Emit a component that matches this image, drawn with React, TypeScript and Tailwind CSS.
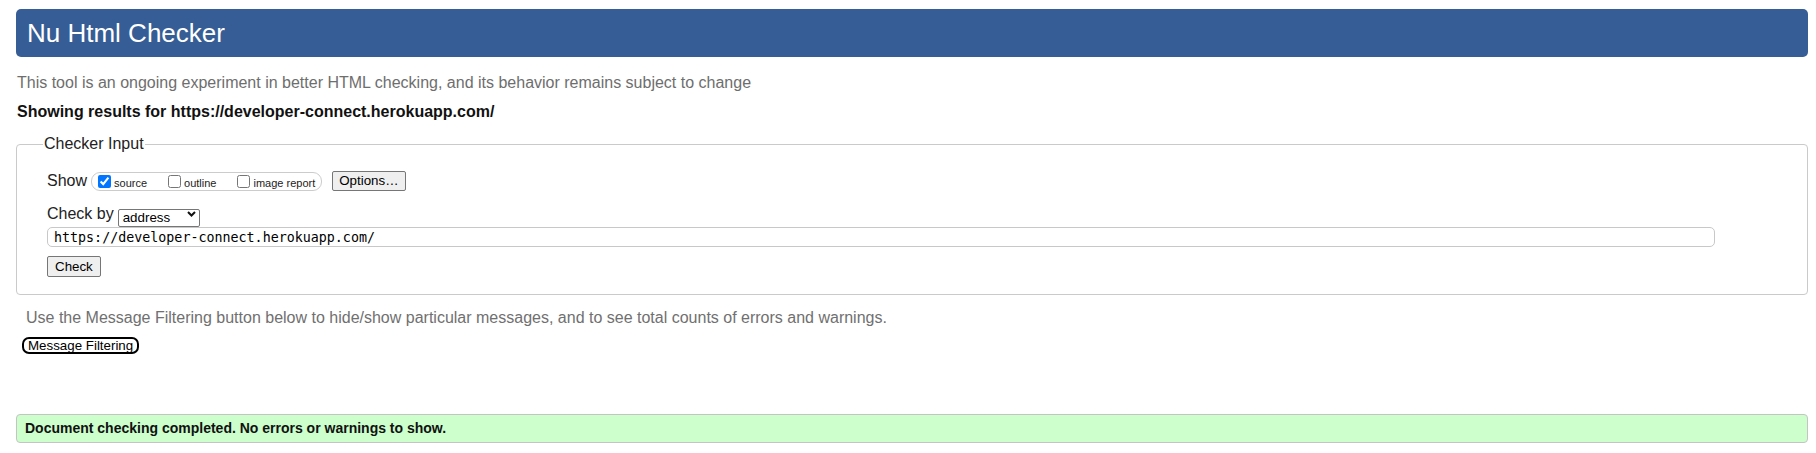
import React from "react";

/**
 * Nu Html Checker — result page for a checked address: the title bar, the
 * tagline, the "Checker Input" fieldset with its show/check-by controls, the
 * message-filtering hint and the green "no errors" notice.
 */

const SHOW_OPTIONS = [
  { label: "source", checked: true },
  { label: "outline", checked: false },
  { label: "image report", checked: false },
];

function ShowOptions() {
  return (
    <div className="ml-[4px] flex h-[19px] items-center gap-[21px] rounded-[9px] border border-[#cccccc] px-[6px]">
      {SHOW_OPTIONS.map((opt) => (
        <label key={opt.label} className="flex items-end gap-[3px] text-[11px] leading-none text-[#222]">
          <input type="checkbox" defaultChecked={opt.checked} className="m-0 h-[13px] w-[13px]" />
          <span className="translate-y-[1px]">{opt.label}</span>
        </label>
      ))}
    </div>
  );
}

function CheckBySelect() {
  return (
    <div className="relative ml-[4px] h-[18px] w-[82px]">
      <select
        defaultValue="address"
        className="h-full w-full appearance-none rounded-[2px] border border-[#767676] bg-white pl-[4px] text-[13.33px] leading-none text-black"
      >
        <option value="address">address</option>
        <option value="file">file upload</option>
        <option value="text">text input</option>
      </select>
      {/* native arrow differs between builds, so draw the chevron ourselves */}
      <svg
        className="pointer-events-none absolute right-[4px] top-[6px]"
        width="9"
        height="6"
        viewBox="0 0 9 6"
        fill="none"
      >
        <path d="M1 1l3.5 3.5L8 1" stroke="#111" strokeWidth="2" />
      </svg>
    </div>
  );
}

export default function App() {
  return (
    <div className="min-h-[453px] bg-white pl-[16px] pr-[8px] pt-[9px] font-['Liberation_Sans',Arial,sans-serif]">
      <header className="flex h-[48px] items-center rounded-[5px] bg-[#365d95] pl-[11px] text-[26px] leading-none text-white">
        Nu Html Checker
      </header>

      <p className="mt-[17px] pl-[1px] text-[16px] leading-[18px] text-[#6e6e6e]">
        This tool is an ongoing experiment in better HTML checking, and its behavior remains subject to change
      </p>
      <p className="mt-[11px] pl-[1px] text-[16px] font-bold leading-[18px] text-[#111]">
        Showing results for https://developer-connect.herokuapp.com/
      </p>

      <fieldset className="mt-[14px] rounded-[4px] border border-[#cacaca] pb-[17px] pl-[30px]">
        {/* the legend sits inside the padding, so pull it back toward the border */}
        <legend className="-ml-[4px] px-px text-[16px] leading-[18px] text-[#222]">Checker Input</legend>

        <div className="mt-[18px] flex h-[20px] items-center text-[16px] text-[#222]">
          <span>Show</span>
          <ShowOptions />
          <button className="ml-[10px] h-[20px] rounded-[2px] border border-[#767676] bg-[#efefef] px-[6px] text-[13.33px] leading-none text-black">
            Options…
          </button>
        </div>

        <div className="mt-[13px] flex h-[20px] items-center text-[16px] text-[#222]">
          <span>Check by</span>
          <CheckBySelect />
        </div>

        <input
          type="url"
          defaultValue="https://developer-connect.herokuapp.com/"
          className="mt-[3px] block h-[20px] w-[1668px] rounded-[5px] border border-[#c8c8c8] bg-white pl-[6px] font-['DejaVu_Sans_Mono',monospace] text-[13.33px] leading-none text-black"
        />

        <button className="mt-[9px] block h-[21px] rounded-[2px] border border-[#767676] bg-[#efefef] px-[7px] text-[13.33px] leading-none text-black">
          Check
        </button>
      </fieldset>

      <p className="mt-[14px] pl-[10px] text-[16px] leading-[18px] text-[#707070]">
        Use the Message Filtering button below to hide/show particular messages, and to see total counts of errors and warnings.
      </p>
      <button className="ml-[6px] mt-[10px] block h-[17px] rounded-[7px] border-2 border-black bg-white px-[4px] text-[13.33px] leading-none text-black">
        Message Filtering
      </button>

      <div className="mt-[60px] flex h-[29px] items-center rounded-[4px] border border-[#c4c4c4] bg-[#ccffcc] pl-[8px] text-[14px] font-bold text-[#111]">
        Document checking completed. No errors or warnings to show.
      </div>
    </div>
  );
}
